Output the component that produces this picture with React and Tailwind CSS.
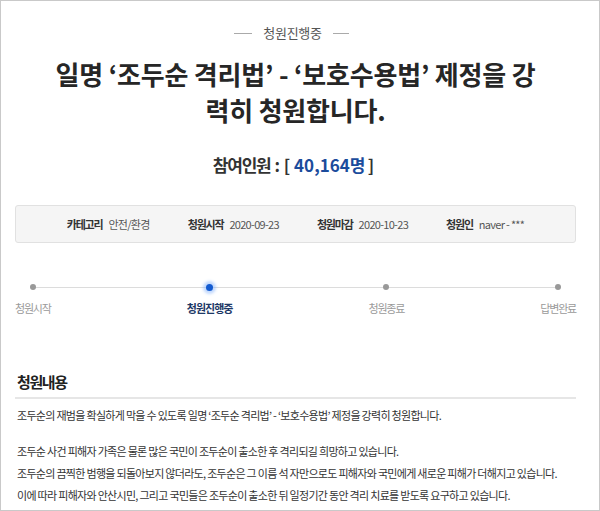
const KR = "font-['Noto_Sans_CJK_KR','Noto_Sans',sans-serif]";

const info = [
  { label: '카테고리', value: '안전/환경' },
  { label: '청원시작', value: '2020-09-23' },
  { label: '청원마감', value: '2020-10-23' },
  { label: '청원인', value: 'naver - ***' },
];

const steps = [
  { label: '청원시작', active: false },
  { label: '청원진행중', active: true },
  { label: '청원종료', active: false },
  { label: '답변완료', active: false },
];

export default function App() {
  return (
    <div className={`${KR} w-[600px] h-[511px] overflow-hidden bg-white border border-[#c9c9c9] text-[#333]`}>
      <div className="w-[561px] ml-[14px]">
        {/* status tag */}
        <div className="pt-[23px] flex items-center justify-center gap-[11px] ml-[-8px]">
          <span className="w-[18px] h-px bg-[#aaa]" />
          <span className="text-[13px] leading-[18px] tracking-[-0.3px] text-[#555]">청원진행중</span>
          <span className="w-[16px] h-px bg-[#aaa]" />
        </div>

        <h1 className="mt-[14px] text-center text-[26px] leading-[36px] font-bold tracking-[-0.2px] text-[#262626]">
          일명 ‘조두순 격리법’ - ‘보호수용법’ 제정을 강<br />력히 청원합니다.
        </h1>

        <div className="mt-[25px] text-center text-[17px] leading-[24px] font-bold text-[#333] ml-[-4px] whitespace-pre">
          <span className="tracking-[-1.2px]">참여인원</span>
          <span> : [ </span>
          <span className="text-[#1b4c9c]">40,164<span className="tracking-[-1.5px]">명</span></span>
          <span> ]</span>
        </div>

        {/* info box */}
        <div className="mt-[28px] h-[38px] bg-[#f5f5f5] border border-[#e1e1e1] rounded-[3px] flex items-center justify-center gap-[38px] text-[11px]">
          {info.map((it) => (
            <div key={it.label} className="flex items-center gap-[6px]">
              <span className="font-bold tracking-[-1.2px] text-[#333]">{it.label}</span>
              <span className="text-[#555] tracking-[-0.7px]">{it.value}</span>
            </div>
          ))}
        </div>

        {/* progress */}
        <div className="relative mt-[38px]">
          <div className="absolute left-[19px] right-[19px] top-[6px] h-px bg-[#dcdcdc]" />
          <div className="relative flex justify-between">
            {steps.map((s) => (
              <div key={s.label} className="flex flex-col items-center">
                <div className="h-[12px] flex items-center justify-center">
                  {s.active ? (
                    <span className="w-[7px] h-[7px] rounded-full bg-[#135bd1] shadow-[0_0_3px_3px_rgba(120,170,250,0.45)]" />
                  ) : (
                    <span className="w-[6px] h-[6px] rounded-full bg-[#999]" />
                  )}
                </div>
                <span
                  className={
                    s.active
                      ? 'mt-[7px] text-[11px] leading-[16px] font-bold tracking-[-1px] text-[#1d3866]'
                      : 'mt-[7px] text-[11px] leading-[16px] tracking-[-1.2px] text-[#9a9a9a]'
                  }
                >
                  {s.label}
                </span>
              </div>
            ))}
          </div>
        </div>

        {/* content */}
        <h2 className="mt-[55px] pl-[2px] pb-[4px] border-b-2 border-[#e6e6e6] text-[15px] leading-[22px] font-bold tracking-[-1.4px] text-[#222]">
          청원내용
        </h2>
        <div className="mt-[5px] pl-[2px] text-[11px] leading-[22px] tracking-[-0.7px] text-[#333]">
          <p>조두순의 재범을 확실하게 막을 수 있도록 일명 ‘조두순 격리법’ - ‘보호수용법’ 제정을 강력히 청원합니다.</p>
          <p className="mt-[14px]">
            조두순 사건 피해자 가족은 물론 많은 국민이 조두순이 출소한 후 격리되길 희망하고 있습니다.
            <br />
            조두순의 끔찍한 범행을 되돌아보지 않더라도, 조두순은 그 이름 석 자만으로도 피해자와 국민에게 새로운 피해가 더해지고 있습니다.
            <br />
            이에 따라 피해자와 안산시민, 그리고 국민들은 조두순이 출소한 뒤 일정기간 동안 격리 치료를 받도록 요구하고 있습니다.
          </p>
        </div>
      </div>
    </div>
  );
}
